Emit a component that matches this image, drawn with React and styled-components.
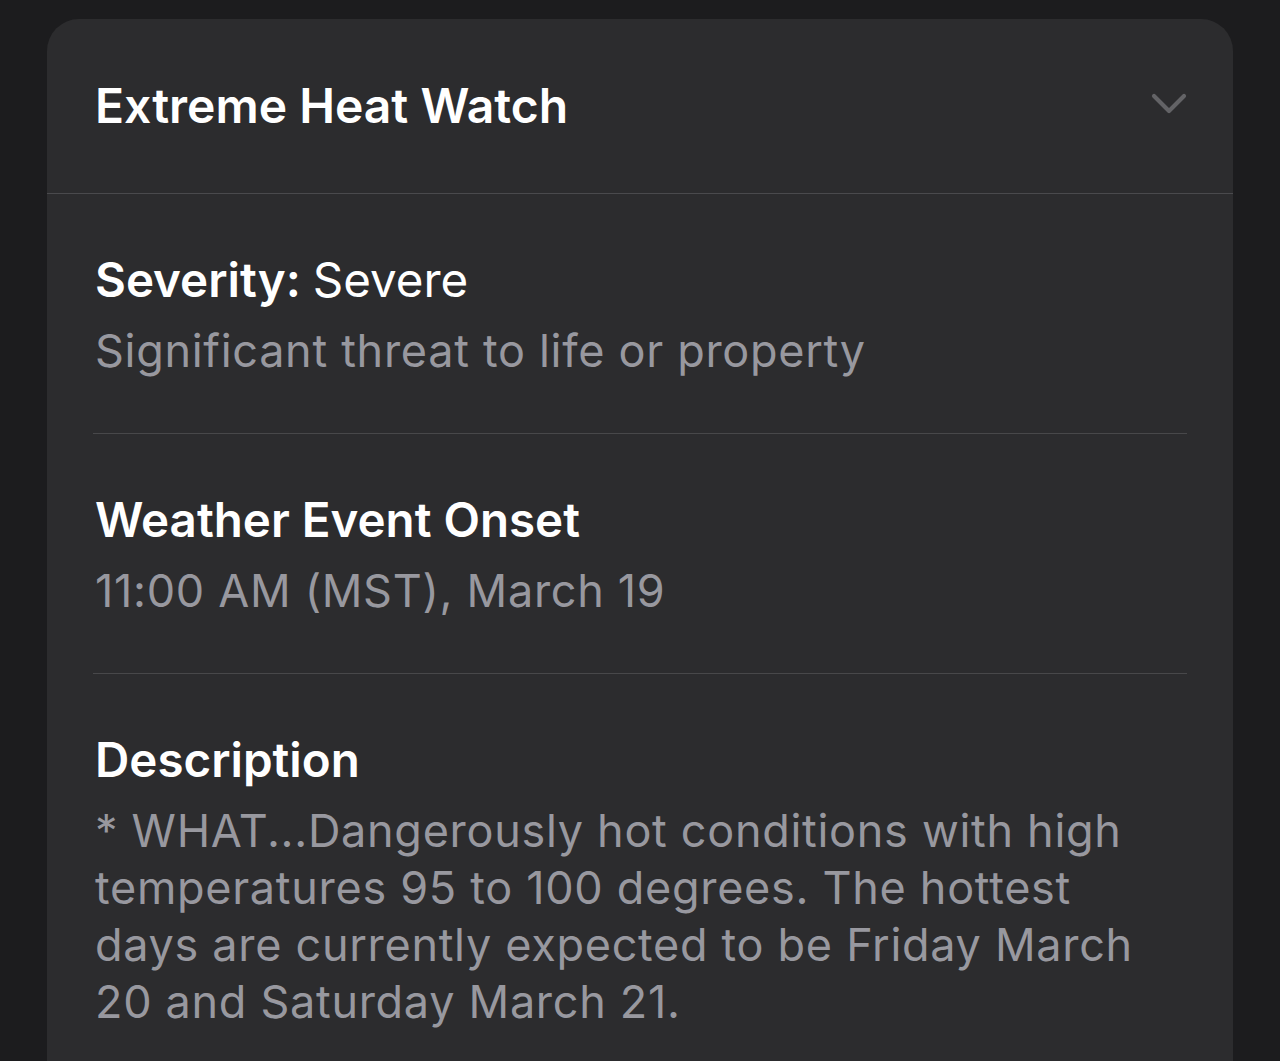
import React from "react";
import styled, { createGlobalStyle } from "styled-components";

const GlobalStyle = createGlobalStyle`
  html, body {
    margin: 0;
    padding: 0;
    background: #1c1c1e;
    overflow: hidden;
  }
  body {
    font-family: Inter, "Noto Sans", "Liberation Sans", sans-serif;
    -webkit-font-smoothing: antialiased;
  }
`;

const Page = styled.div`
  min-height: 1061px;
  padding: 19px 47px 0;
  box-sizing: border-box;
`;

const Card = styled.div`
  background: #2c2c2e;
  border-radius: 32px 32px 0 0;
  min-height: 1042px;
`;

const Header = styled.div`
  height: 175px;
  box-sizing: border-box;
  display: flex;
  align-items: center;
  justify-content: space-between;
  padding: 0 46px 0 48px;
  border-bottom: 1.5px solid #4a4a4d;
`;

const HeaderTitle = styled.h1`
  margin: 0;
  font-size: 48px;
  line-height: 58px;
  font-weight: 600;
  color: #fff;
`;

const Body = styled.div`
  padding: 0 46px;
`;

const Section = styled.div`
  padding: 57px 2px 54px;
  border-bottom: ${(p) => (p.$last ? "none" : "1.5px solid #48484a")};
`;

const Title = styled.div`
  font-size: 47.5px;
  line-height: 58px;
  font-weight: 600;
  color: #fff;
  margin-bottom: 13px;
`;

const Value = styled.span`
  font-weight: 400;
`;

const Text = styled.p`
  margin: 0;
  font-size: 45px;
  line-height: 57px;
  color: #98989f;
  letter-spacing: 0.7px;
`;

const Chevron = () => (
  <svg width="36" height="22" viewBox="0 0 36 22" fill="none" style={{ marginTop: -4 }}>
    <polyline
      points="3,3 18,18 33,3"
      stroke="#636366"
      strokeWidth="4.2"
      strokeLinecap="round"
      strokeLinejoin="round"
    />
  </svg>
);

export default function App() {
  return (
    <>
      <GlobalStyle />
      <Page>
        <Card>
          <Header>
            <HeaderTitle>Extreme Heat Watch</HeaderTitle>
            <Chevron />
          </Header>
          <Body>
            <Section>
              <Title>
                Severity: <Value>Severe</Value>
              </Title>
              <Text>Significant threat to life or property</Text>
            </Section>
            <Section>
              <Title>Weather Event Onset</Title>
              <Text>11:00 AM (MST), March 19</Text>
            </Section>
            <Section $last>
              <Title>Description</Title>
              <Text>
                * WHAT...Dangerously hot conditions with high temperatures 95
                to 100 degrees. The hottest days are currently expected to be
                Friday March 20 and Saturday March 21.
              </Text>
            </Section>
          </Body>
        </Card>
      </Page>
    </>
  );
}
